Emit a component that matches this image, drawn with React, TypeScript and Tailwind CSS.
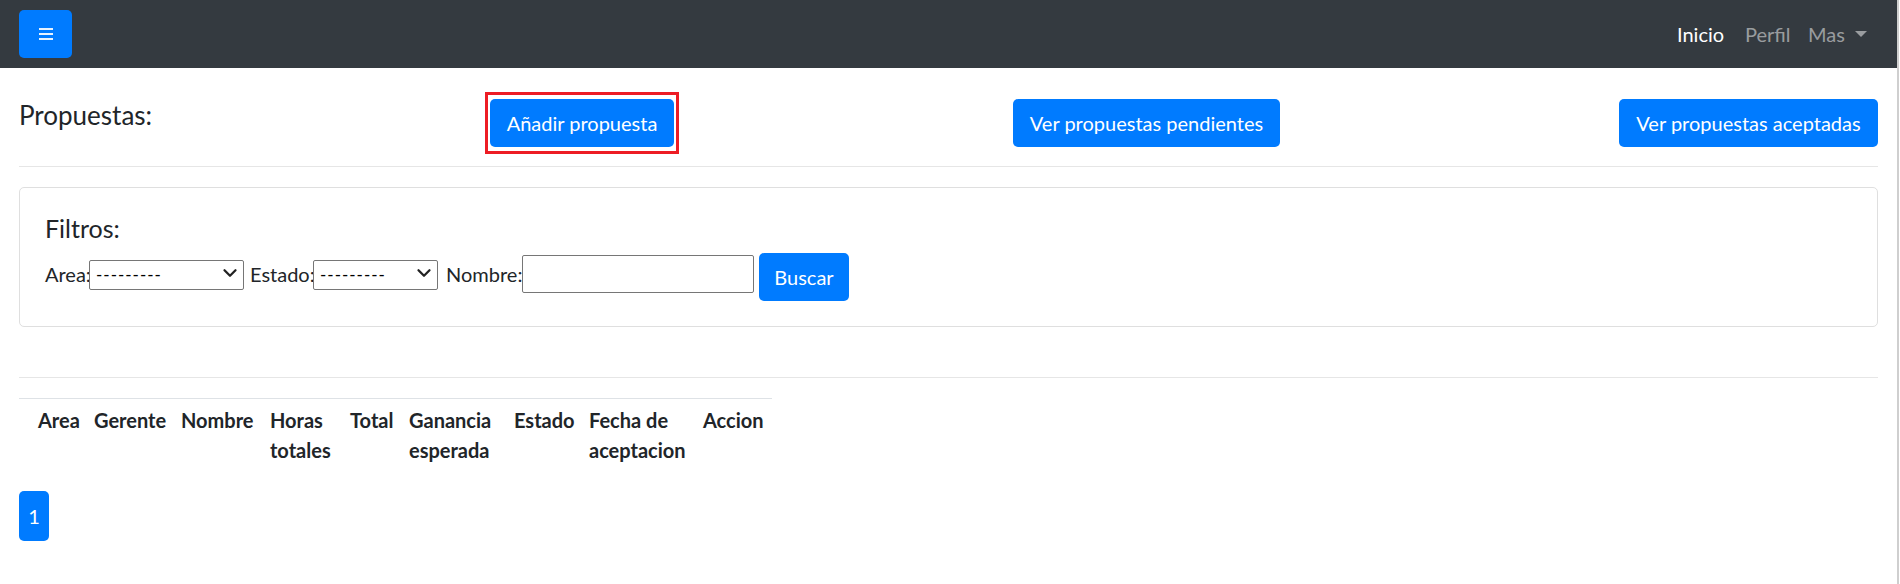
import { ChevronDown } from "lucide-react";

const columns = [
  { label: "Area", w: "w-[75px]", pad: "pl-[19px]" },
  { label: "Gerente", w: "w-[87px]", pad: "" },
  { label: "Nombre", w: "w-[89px]", pad: "" },
  { label: "Horas totales", w: "w-[80px]", pad: "" },
  { label: "Total", w: "w-[59px]", pad: "" },
  { label: "Ganancia esperada", w: "w-[105px]", pad: "" },
  { label: "Estado", w: "w-[75px]", pad: "" },
  { label: "Fecha de aceptacion", w: "w-[114px]", pad: "" },
  { label: "Accion", w: "w-[69px]", pad: "" },
];

function FakeSelect({ width }: { width: string }) {
  return (
    <span className={`relative mt-[5px] block h-[30px] ${width}`}>
      <select className="h-full w-full appearance-none rounded-[2px] border border-[#767676] bg-white pl-[6px] text-[17px] leading-[28px] tracking-[1px] text-black outline-none">
        <option>---------</option>
      </select>
      <ChevronDown
        className="pointer-events-none absolute right-[3px] top-[4px] text-[#222]"
        size={22}
        strokeWidth={2.5}
        aria-hidden
      />
    </span>
  );
}

export default function App() {
  return (
    <div className="flex min-h-[584px] w-[1900px] bg-white font-['Lato',sans-serif] text-[20px] leading-[30px] text-[#212529]">
      <div className="w-[1897px] shrink-0">
        <nav className="flex h-[68px] items-center justify-between bg-[#343a40] pl-[19px] pr-[30px]">
          <button
            type="button"
            className="flex h-[48px] w-[53px] flex-col items-center justify-center gap-[3px] rounded-[5px] bg-[#007bff]"
          >
            <span className="h-[2px] w-[14px] bg-white/90" />
            <span className="h-[2px] w-[14px] bg-white/90" />
            <span className="h-[2px] w-[14px] bg-white/90" />
          </button>
          <ul className="flex items-center">
            <li className="w-[68px] text-white">Inicio</li>
            <li className="w-[63px] text-white/50">Perfil</li>
            <li className="w-[47px] text-white/50">Mas</li>
            <li className="h-0 w-0 border-x-[6px] border-t-[6px] border-x-transparent border-t-white/50" />
          </ul>
        </nav>

        <main className="px-[19px]">
          <div className="flex items-start justify-between pt-[31px]">
            <h4 className="-mt-[2px] w-[132px] whitespace-nowrap text-[26px] leading-[36px]">
              Propuestas:
            </h4>
            <div className="relative">
              <button
                type="button"
                className="h-[48px] w-[184px] rounded-[5px] bg-[#007bff] text-white"
              >
                Añadir propuesta
              </button>
              <span className="pointer-events-none absolute -bottom-[7px] -left-[5px] -right-[5px] -top-[7px] border-[3px] border-[#ed1c24]" />
            </div>
            <button
              type="button"
              className="h-[48px] w-[267px] rounded-[5px] bg-[#007bff] text-white"
            >
              Ver propuestas pendientes
            </button>
            <button
              type="button"
              className="h-[48px] w-[259px] rounded-[5px] bg-[#007bff] text-white"
            >
              Ver propuestas aceptadas
            </button>
          </div>

          <hr className="mt-[19px] border-t border-[#e6e6e6]" />

          <div className="mt-[20px] rounded-[5px] border border-[#dfdfdf] p-[25px]">
            <h5 className="mb-[10px] text-[25px] leading-[30px]">Filtros:</h5>
            <form className="flex items-start">
              <label className="mt-[6px] w-[44px] whitespace-nowrap">Area:</label>
              <FakeSelect width="w-[155px]" />
              <label className="ml-[6px] mt-[6px] w-[63px] whitespace-nowrap">Estado:</label>
              <FakeSelect width="w-[125px]" />
              <label className="ml-[8px] mt-[6px] w-[76px] whitespace-nowrap">Nombre:</label>
              <input
                type="text"
                className="mt-[2px] h-[38px] w-[232px] rounded-[2px] border border-[#767676] bg-white outline-none"
              />
              <button
                type="button"
                className="ml-[5px] h-[48px] w-[90px] rounded-[5px] bg-[#007bff] text-white"
              >
                Buscar
              </button>
            </form>
          </div>

          <hr className="mt-[50px] border-t border-[#e6e6e6]" />

          <table className="mt-[20px] w-[753px] table-fixed border-t border-[#dee2e6]">
            <thead>
              <tr>
                {columns.map((c) => (
                  <th
                    key={c.label}
                    className={`${c.w} ${c.pad} pt-[6px] pb-[6px] text-left align-top font-bold`}
                  >
                    {c.label}
                  </th>
                ))}
              </tr>
            </thead>
          </table>

          <div className="mt-[20px] flex">
            <span className="flex h-[50px] w-[30px] items-center justify-center rounded-[5px] bg-[#007bff] text-white">
              1
            </span>
          </div>
        </main>
      </div>
      <div className="w-[3px] shrink-0 border-l-2 border-[#cfcfcf]" />
    </div>
  );
}
